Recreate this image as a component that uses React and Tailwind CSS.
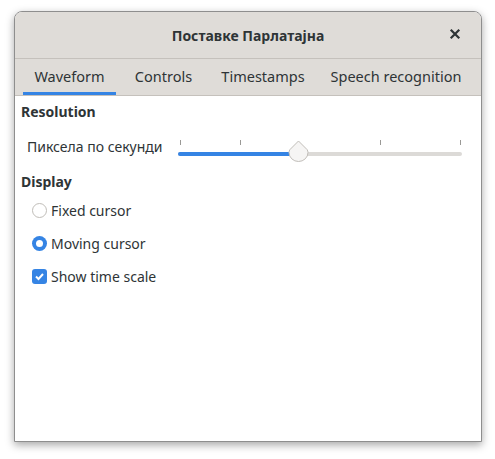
import React from "react";

export default function App() {
  const font = { fontFamily: '"Noto Sans", "Open Sans", sans-serif' };
  return (
    <div className="w-[495px] h-[459px] bg-white pt-[11px] pl-[14px]" style={font}>
      <div className="w-[468px] h-[431px] flex flex-col rounded-t-[8px] border border-[#8e8e8e] bg-white shadow-[0_3px_9px_rgba(0,0,0,0.35)] overflow-hidden">
        <div className="h-[47px] shrink-0 bg-[#dfdcd8] border-b border-[#c5c1bc] flex items-center relative">
          <div className="flex-1 text-center text-[14px] font-bold text-[#2e3436]">Поставке Парлатајна</div>
          <div className="absolute right-[18px] top-[14px] text-[#2e3436]">
            <svg width="16" height="16" viewBox="0 0 16 16">
              <path d="M4.5 4.5 L11.5 11.5 M11.5 4.5 L4.5 11.5" stroke="#2e3436" strokeWidth="2.2" strokeLinecap="square" />
            </svg>
          </div>
        </div>
        <div className="h-[37px] shrink-0 bg-[#dfdcd8] border-b border-[#c5c1bc] flex pl-[8px] text-[14.5px] text-[#2e3436]">
          <div className="w-[93px] flex items-center justify-center border-b-[3px] border-[#3584e4] pt-[3px]">Waveform</div>
          <div className="w-[95px] flex items-center justify-center">Controls</div>
          <div className="w-[104px] flex items-center justify-center">Timestamps</div>
          <div className="w-[136px] ml-[13px] flex items-center justify-center whitespace-nowrap">Speech recognition</div>
        </div>
        <div className="flex-1 flex flex-col px-[6px] text-[14px] text-[#2e3436]">
          <div className="font-bold mt-[6px] h-[20px] leading-[20px]">Resolution</div>
          <div className="flex items-center mt-[12px] h-[24px]">
            <div className="pl-[6px] w-[157px] whitespace-nowrap">Пиксела по секунди</div>
            <div className="relative w-[284px] h-[24px] top-[4px]">
              <div className="absolute left-[2px] top-[2px] w-px h-[5px] bg-[#9a9996]" />
              <div className="absolute left-[62px] top-[2px] w-px h-[5px] bg-[#9a9996]" />
              <div className="absolute left-[202px] top-[2px] w-px h-[5px] bg-[#9a9996]" />
              <div className="absolute left-[282px] top-[2px] w-px h-[5px] bg-[#9a9996]" />
              <div className="absolute left-0 right-0 top-[14px] h-[4px] rounded-full bg-[#dcdad7]" />
              <div className="absolute left-0 w-[120px] top-[14px] h-[4px] rounded-full bg-[#3584e4]" />
              <svg className="absolute left-[110px] top-[2px]" width="21" height="22" viewBox="0 0 21 22">
                <path d="M10.5 1 L19 9.5 Q20 11 20 12.5 A9.5 9 0 0 1 1 12.5 Q1 11 2 9.5 Z" fill="#f6f5f4" stroke="#c0bdb8" strokeWidth="1" />
              </svg>
            </div>
          </div>
          <div className="font-bold mt-[14px] h-[20px] leading-[20px]">Display</div>
          <div className="flex items-center mt-[8px] h-[20px] pl-[11px] gap-[4px]">
            <div className="w-[15px] h-[15px] rounded-full border border-[#c0bdb8] bg-white" />
            <span>Fixed cursor</span>
          </div>
          <div className="flex items-center mt-[13px] h-[20px] pl-[11px] gap-[4px]">
            <div className="w-[15px] h-[15px] rounded-full bg-[#3584e4] flex items-center justify-center">
              <div className="w-[7px] h-[7px] rounded-full bg-white" />
            </div>
            <span>Moving cursor</span>
          </div>
          <div className="flex items-center mt-[13px] h-[20px] pl-[11px] gap-[4px]">
            <div className="w-[15px] h-[15px] rounded-[3px] bg-[#3584e4] flex items-center justify-center">
              <svg width="11" height="11" viewBox="0 0 11 11">
                <path d="M2 5.5 L4.5 8 L9 3" stroke="white" strokeWidth="2" fill="none" />
              </svg>
            </div>
            <span>Show time scale</span>
          </div>
        </div>
      </div>
    </div>
  );
}
